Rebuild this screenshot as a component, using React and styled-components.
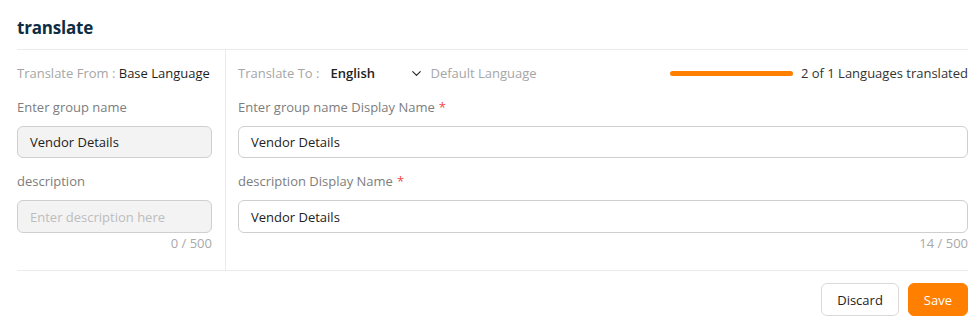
import React from 'react';
import styled, { createGlobalStyle } from 'styled-components';
import { ChevronDown } from 'lucide-react';

const GlobalStyle = createGlobalStyle`
    body {
        margin: 0;
        background: #ffffff;
        font-family: "Open Sans", "Liberation Sans", sans-serif;
        font-size: 13px;
        color: #222;
    }
`;

const Page = styled.div`
    padding: 0 12px 0 17px;
    width: 980px;
    box-sizing: border-box;
`;

const Header = styled.div`
    height: 49px;
    display: flex;
    align-items: center;
    border-bottom: 1px solid #ebebeb;
`;

const Title = styled.h2`
    margin: 0;
    padding-top: 6px;
    font-size: 17px;
    font-weight: 700;
    color: #0e2d42;
    letter-spacing: -0.2px;
`;

const Body = styled.div`
    display: grid;
    grid-template-columns: 209px 1fr;
    height: 220px;
    border-bottom: 1px solid #ebebeb;
`;

const Column = styled.div`
    display: flex;
    flex-direction: column;
    padding-top: 13px;
    padding-left: ${p => (p.right ? '12px' : '0')};
    padding-right: ${p => (p.right ? '0' : '13px')};
    border-right: ${p => (p.right ? 'none' : '1px solid #ebebeb')};
`;

const TopRow = styled.div`
    display: flex;
    align-items: center;
    height: 20px;
    white-space: nowrap;
`;

const Muted = styled.span`
    color: #a6a6a6;
`;

const Strong = styled.span`
    color: #1f1f1f;
    font-weight: 500;
`;

const Select = styled.div`
    display: flex;
    align-items: center;
    justify-content: space-between;
    width: 94px;
    margin-left: 11px;
    margin-right: 6px;
    color: #222;
    font-weight: 600;
`;

const Progress = styled.div`
    margin-left: auto;
    display: flex;
    align-items: center;
    gap: 8px;
    color: #333;
`;

const Bar = styled.div`
    width: 123px;
    height: 5px;
    border-radius: 3px;
    background: #ff7f00;
`;

const Label = styled.div`
    margin-top: ${p => p.top || 14}px;
    height: 20px;
    line-height: 20px;
    color: #7d7d7d;
`;

const Required = styled.span`
    color: #f04848;
    margin-left: 4px;
`;

const Input = styled.div`
    margin-top: 9px;
    height: ${p => p.h || 32}px;
    box-sizing: border-box;
    border: 1px solid #cfcfcf;
    border-radius: 6px;
    background: ${p => (p.disabled ? '#f3f3f3' : '#fff')};
    display: flex;
    align-items: center;
    padding: 0 12px;
    color: ${p => (p.placeholder ? '#bdbdbd' : '#222')};
`;

const Counter = styled.div`
    height: 20px;
    line-height: 20px;
    text-align: right;
    color: #a9a9a9;
`;

const Footer = styled.div`
    display: flex;
    justify-content: flex-end;
    gap: 9px;
    padding-top: 12px;
`;

const Button = styled.button`
    height: 33px;
    padding: 0 15px;
    border-radius: 6px;
    font-family: inherit;
    font-size: 13px;
    border: 1px solid ${p => (p.primary ? '#ff8000' : '#d9d9d9')};
    background: ${p => (p.primary ? '#ff8000' : '#fff')};
    color: ${p => (p.primary ? '#fff' : '#222')};
`;

export default function App() {
    return (
        <Page>
            <GlobalStyle />
            <Header>
                <Title>translate</Title>
            </Header>
            <Body>
                <Column>
                    <TopRow>
                        <Muted>Translate From :&nbsp;</Muted>
                        <Strong>Base Language</Strong>
                    </TopRow>
                    <Label>Enter group name</Label>
                    <Input disabled>Vendor Details</Input>
                    <Label top={13}>description</Label>
                    <Input disabled placeholder h={33}>Enter description here</Input>
                    <Counter>0 / 500</Counter>
                </Column>
                <Column right>
                    <TopRow>
                        <Muted>Translate To :</Muted>
                        <Select>
                            English
                            <ChevronDown size={15} strokeWidth={1.75} color="#222" />
                        </Select>
                        <Muted>Default Language</Muted>
                        <Progress>
                            <Bar />
                            2 of 1 Languages translated
                        </Progress>
                    </TopRow>
                    <Label>Enter group name Display Name<Required>*</Required></Label>
                    <Input>Vendor Details</Input>
                    <Label top={13}>description Display Name<Required>*</Required></Label>
                    <Input h={33}>Vendor Details</Input>
                    <Counter>14 / 500</Counter>
                </Column>
            </Body>
            <Footer>
                <Button>Discard</Button>
                <Button primary>Save</Button>
            </Footer>
        </Page>
    );
}
